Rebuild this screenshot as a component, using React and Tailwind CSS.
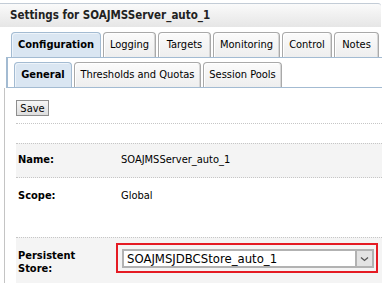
import React from "react";

const F = "font-['DejaVu_Sans_Condensed','DejaVu_Sans',sans-serif]";

function Tab({ label, w, active }) {
  return (
    <div
      className={
        "h-[25px] flex items-center justify-center rounded-t-[4px] border border-b-0 text-[11px] text-black shrink-0 " +
        (active
          ? "bg-[#dae6f2] border-[#a3bbd2] font-bold shadow-[inset_1px_1px_0_#eef4fa]"
          : "bg-gradient-to-b from-[#fbfbfb] to-[#eeeeee] border-[#a9a9a9] shadow-[inset_1px_1px_0_#ffffff,inset_-1px_0_0_#d6d6d6]")
      }
      style={{ width: w }}
    >
      {label}
    </div>
  );
}

export default function App() {
  return (
    <div className={"w-[382px] h-[283px] overflow-hidden bg-white text-black " + F}>
      <div className="mt-[3px] h-[24px] border-t border-[#c3ccd6] bg-gradient-to-b from-[#fafafa] to-[#e6e6e6] flex items-center pl-[10px] mr-[1px] rounded-tr-[3px]">
        <span className="text-[11.5px] font-bold text-[#222]">Settings for SOAJMSServer_auto_1</span>
      </div>
      <div className="mt-[5px] pl-[11px] flex gap-[2px] items-end h-[25px]">
        <Tab label="Configuration" w={90} active />
        <Tab label="Logging" w={53} />
        <Tab label="Targets" w={53} />
        <Tab label="Monitoring" w={67} />
        <Tab label="Control" w={50} />
        <Tab label="Notes" w={45} />
      </div>
      <div className="ml-[6px] border-t border-l-2 border-b border-[#a3bbd2] pt-[4px] pl-[6px] flex gap-[2px] items-end">
        <Tab label="General" w={58} active />
        <Tab label="Thresholds and Quotas" w={127} />
        <Tab label="Session Pools" w={79} />
      </div>
      <div className="ml-[4px] border-l border-[#c4c4c4] pl-[11px] h-[200px] text-[11px]">
        <div className="pt-[12px]">
          <button className="h-[16px] w-[33px] border border-[#8e8e8e] bg-gradient-to-b from-[#f6f6f6] to-[#dedede] text-[11px] leading-none flex items-center justify-center">
            Save
          </button>
        </div>
        <div className="mt-[7px] border-t border-dotted border-[#c6c6c6]" />
        <div className="h-[19px]" />
        <div className="flex items-center h-[35px] bg-[#f4f4f4] border-y border-dotted border-[#c6c6c6]">
          <div className="w-[105px] pl-[2px] font-bold">Name:</div>
          <div>SOAJMSServer_auto_1</div>
        </div>
        <div className="flex h-[59px] pt-[11px] leading-[13px]">
          <div className="w-[105px] pl-[2px] font-bold">Scope:</div>
          <div>Global</div>
        </div>
        <div className="flex bg-[#f4f4f4] border-t border-dotted border-[#c6c6c6] h-[46px]">
          <div className="w-[100px] pl-[2px] pt-[11px] font-bold leading-[13px]">
            Persistent
            <br />
            Store:
          </div>
          <div className="mt-[5px] w-[262px] h-[30px] border-2 border-[#e51b24] pl-[4px] pt-[4px]">
            <div className="w-[252px] h-[19px] border-2 border-[#b2b2b2] bg-white flex items-stretch">
              <div className="flex-1 flex items-center pl-[3px] text-[13px] leading-none">SOAJMSJDBCStore_auto_1</div>
              <div className="w-[17px] bg-[#e3e3e3] border-l-2 border-[#b2b2b2] flex items-center justify-center">
                <svg width="9" height="6" viewBox="0 0 9 6">
                  <path d="M1 1.5 L4.5 4.5 L8 1.5" fill="none" stroke="#555" strokeWidth="1.3" />
                </svg>
              </div>
            </div>
          </div>
        </div>
      </div>
    </div>
  );
}
